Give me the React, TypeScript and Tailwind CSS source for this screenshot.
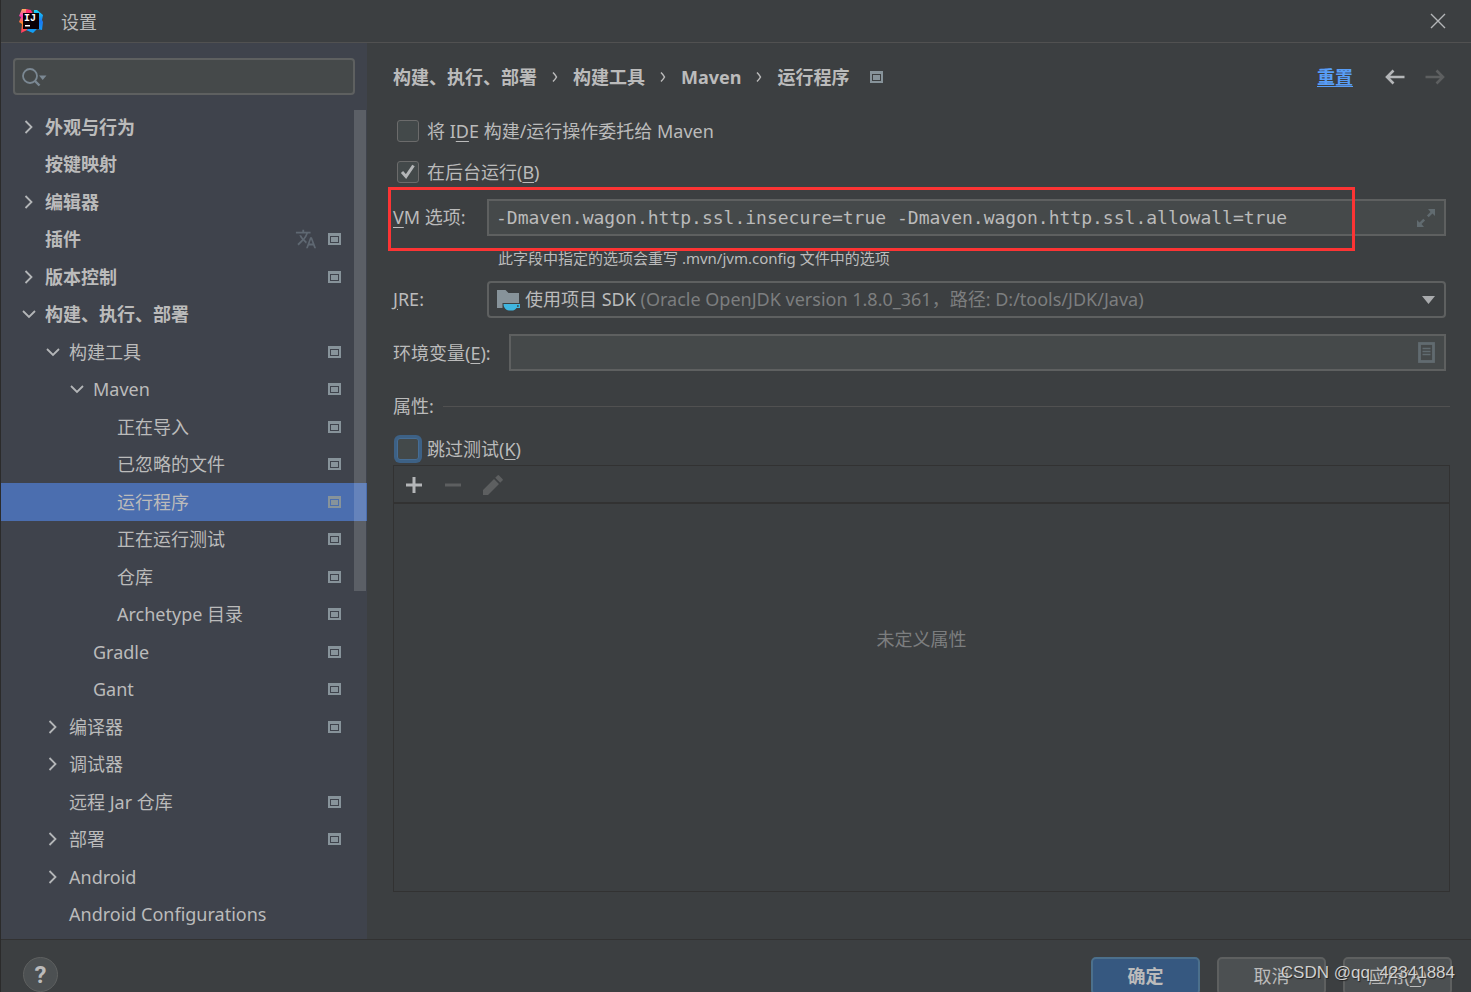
import React, { useState } from "react";
import { MdTranslate } from "react-icons/md";

type TreeNode = {
  label: string;
  level: 0 | 1 | 2 | 3;
  state?: "open" | "closed";
  project?: boolean;
  translate?: boolean;
};

const nodes: TreeNode[] = [
  { label: "外观与行为", level: 0, state: "closed" },
  { label: "按键映射", level: 0 },
  { label: "编辑器", level: 0, state: "closed" },
  { label: "插件", level: 0, project: true, translate: true },
  { label: "版本控制", level: 0, state: "closed", project: true },
  { label: "构建、执行、部署", level: 0, state: "open" },
  { label: "构建工具", level: 1, state: "open", project: true },
  { label: "Maven", level: 2, state: "open", project: true },
  { label: "正在导入", level: 3, project: true },
  { label: "已忽略的文件", level: 3, project: true },
  { label: "运行程序", level: 3, project: true },
  { label: "正在运行测试", level: 3, project: true },
  { label: "仓库", level: 3, project: true },
  { label: "Archetype 目录", level: 3, project: true },
  { label: "Gradle", level: 2, project: true },
  { label: "Gant", level: 2, project: true },
  { label: "编译器", level: 1, state: "closed", project: true },
  { label: "调试器", level: 1, state: "closed" },
  { label: "远程 Jar 仓库", level: 1, project: true },
  { label: "部署", level: 1, state: "closed", project: true },
  { label: "Android", level: 1, state: "closed" },
  { label: "Android Configurations", level: 1 },
];

const indent = ["pl-4", "pl-10", "pl-16", "pl-22"];

function ProjectIcon() {
  return (
    <svg width="13" height="12" viewBox="0 0 13 12" className="shrink-0" aria-hidden="true">
      <path fill="#87939a" fillRule="evenodd" d="M0 0h13v12H0zM2 3v7h9V3z" />
      <rect x="3" y="4" width="7" height="5" fill="#87939a" />
    </svg>
  );
}

function Chevron({ open }: { open: boolean }) {
  return (
    <svg width="16" height="16" viewBox="0 0 16 16" fill="none" stroke="#b4b6b8" strokeWidth="1.8" aria-hidden="true">
      {open ? <path d="M2 5l6 6 6-6" /> : <path d="M4.500 2l6 6-6 6" />}
    </svg>
  );
}

function PathArrow() {
  return (
    <span className="flex w-9 justify-center">
      <svg width="6" height="12" viewBox="0 0 6 12" fill="none" stroke="#bbbbbb" strokeWidth="1.5" aria-hidden="true">
        <path d="M1 1.500q2.500 2.500 3.500 4.500q-1 2-3.500 4.500" />
      </svg>
    </span>
  );
}

function IdeaLogo() {
  return (
    <svg width="24" height="24" viewBox="0 0 24 24" aria-hidden="true">
      <defs>
        <linearGradient id="warm" x1="0" y1="0" x2="0" y2="1">
          <stop offset="0" stopColor="#fcb05a" />
          <stop offset="0.3" stopColor="#f535b8" />
          <stop offset="0.6" stopColor="#ff8a1f" />
          <stop offset="1" stopColor="#ff2f6d" />
        </linearGradient>
        <linearGradient id="cool" x1="0" y1="0" x2="0" y2="1">
          <stop offset="0" stopColor="#16d4f7" />
          <stop offset="0.5" stopColor="#1a78f2" />
          <stop offset="1" stopColor="#12a5f5" />
        </linearGradient>
      </defs>
      <path fill="url(#cool)" d="M15 1l3 0 6 5-1 5 1 2-1 8-5-1-4 4-7-3 8-4z" />
      <path fill="url(#warm)" d="M3 0l5 0 4 8-4 13-6 3 1-9-3-2 2-5-2-1z" />
      <path fill="#fe2d72" d="M7 0l5 1 2 4 2 2H7z" />
      <rect x="4" y="4" width="16" height="16" fill="#0a0006" />
      <text x="5" y="12" fill="#fff" fontSize="10" fontWeight="700" fontFamily="Liberation Mono, monospace">
        IJ
      </text>
      <rect x="6" y="16" width="5" height="1.500" fill="#fff" />
    </svg>
  );
}

function CheckRow({
  id,
  initial = false,
  focused = false,
  className,
  children,
}: {
  id: string;
  initial?: boolean;
  focused?: boolean;
  className: string;
  children: React.ReactNode;
}) {
  const [on, setOn] = useState(initial);
  return (
    <div className={`flex shrink-0 items-center gap-2 pl-1 ${className}`}>
      <span className="relative flex">
        <input
          id={id}
          type="checkbox"
          checked={on}
          onChange={(e) => setOn(e.target.checked)}
          className={`size-[22px] appearance-none border outline-none ${
            focused
              ? "rounded-[3px] border-[#466d94] bg-[#43494a] ring-3 ring-[#3d6185]"
              : "rounded-[3px] border-[#6b6b6b] bg-[#43494a]"
          }`}
        />
        {on && (
          <svg
            className="pointer-events-none absolute inset-0"
            width="22"
            height="22"
            viewBox="0 0 22 22"
            fill="none"
            stroke="#b4b6b8"
            strokeWidth="3"
            aria-hidden="true"
          >
            <path d="M5 11l4 4.500L16.500 4.500" />
          </svg>
        )}
      </span>
      <label htmlFor={id}>{children}</label>
    </div>
  );
}

function Key({ children }: { children: React.ReactNode }) {
  return <span className="underline underline-offset-3">{children}</span>;
}

export default function App() {
  const [selected, setSelected] = useState("运行程序");
  const [vm, setVm] = useState(
    "-Dmaven.wagon.http.ssl.insecure=true -Dmaven.wagon.http.ssl.allowall=true",
  );
  const [env, setEnv] = useState("");

  return (
    <div className="relative flex h-screen flex-col overflow-hidden border-l border-[#2b2b2b] bg-[#3c3f41] font-['Noto_Sans','Noto_Sans_CJK_SC',sans-serif] text-[18px] leading-6 text-[#bbbbbb]">
      <header className="flex h-[43px] shrink-0 items-center border-b border-[#515151] pr-[25px] pl-[18px]">
        <IdeaLogo />
        <h1 className="flex-1 pt-[2px] pl-[18px]">设置</h1>
        <button type="button" aria-label="关闭">
          <svg width="16" height="16" viewBox="0 0 16 16" fill="none" stroke="#b4b6b8" strokeWidth="1.400">
            <path d="M1 1l14 14M15 1L1 15" />
          </svg>
        </button>
      </header>

      <div className="flex min-h-0 flex-1">
        <aside className="relative flex w-[366px] shrink-0 flex-col bg-[#3f434c] pb-[6px]">
          <div className="mx-3 mt-[15px] mb-[13px] flex h-[37px] shrink-0 items-center rounded-[4px] border-2 border-[#5e6060] bg-[#45494a] px-[7px]">
            <svg width="26" height="20" viewBox="0 0 26 20" fill="none" aria-hidden="true">
              <circle cx="8" cy="9" r="7" stroke="#7b8893" strokeWidth="1.800" />
              <path d="M13 14l4.500 4.500" stroke="#7b8893" strokeWidth="2.400" />
              <path d="M17 8.500h7.500L20.700 13z" fill="#7b8893" />
            </svg>
            <input aria-label="搜索设置" className="min-w-0 flex-1 bg-transparent outline-none" />
          </div>
          <ul className="grid min-h-0 flex-1 auto-rows-fr">
            {nodes.map((n) => (
              <li key={n.label} className="flex min-h-0">
                <button
                  type="button"
                  onClick={() => setSelected(n.label)}
                  className={`flex flex-1 items-center pr-[26px] text-left ${indent[n.level]} ${
                    n.level === 0 ? "font-bold" : ""
                  } ${selected === n.label ? "bg-[#4b6eaf]" : ""}`}
                >
                  <span className="mr-1 flex w-6 justify-center">
                    {n.state && <Chevron open={n.state === "open"} />}
                  </span>
                  <span className="flex-1">{n.label}</span>
                  {n.translate && <MdTranslate className="mr-[11px] size-[22px] text-[#5f6872]" />}
                  {n.project && <ProjectIcon />}
                </button>
              </li>
            ))}
          </ul>
          <div className="pointer-events-none absolute top-[67px] right-px bottom-[348px] w-3 bg-white/15" />
        </aside>

        <main className="flex min-w-0 flex-1 flex-col pr-[21px] pb-[47px] pl-[26px]">
          <div className="flex h-[68px] shrink-0 items-center font-bold">
            <nav className="flex flex-1 items-center">
              <span>构建、执行、部署</span>
              <PathArrow />
              <span>构建工具</span>
              <PathArrow />
              <span>Maven</span>
              <PathArrow />
              <span className="mr-[21px]">运行程序</span>
              <ProjectIcon />
            </nav>
            <a href="#reset" className="mr-8 text-[#589df6] underline underline-offset-2">
              重置
            </a>
            <button type="button" aria-label="后退" className="mr-5 text-[#b4b6b8]">
              <svg width="20" height="16" viewBox="0 0 20 16" fill="none" stroke="currentColor" strokeWidth="2.600">
                <path d="M19.500 8H2M8.500 1.500L2 8l6.500 6.500" />
              </svg>
            </button>
            <button type="button" aria-label="前进" className="mr-[5px] text-[#5d5f60]">
              <svg width="20" height="16" viewBox="0 0 20 16" fill="none" stroke="currentColor" strokeWidth="2.600">
                <path d="M.500 8h17.500M11.500 1.500L18 8l-6.500 6.500" />
              </svg>
            </button>
          </div>

          <CheckRow id="delegate" className="h-10">
            将 I<Key>D</Key>E 构建/运行操作委托给 Maven
          </CheckRow>
          <CheckRow id="background" initial className="h-[42px]">
            在后台运行(<Key>B</Key>)
          </CheckRow>

          <div className="relative mr-1 flex shrink-0 items-center pt-[6px]">
            <label htmlFor="vm" className="w-[94px] shrink-0 pb-[2px]">
              <Key>V</Key>M 选项:
            </label>
            <div className="flex h-[37px] min-w-0 flex-1 items-center border-2 border-[#5e6060] bg-[#45494a] pr-[9px] pl-[7px]">
              <input
                id="vm"
                value={vm}
                onChange={(e) => setVm(e.target.value)}
                className="min-w-0 flex-1 bg-transparent font-['DejaVu_Sans_Mono',monospace] text-[18px] outline-none"
              />
              <button type="button" aria-label="展开">
                <svg width="18" height="18" viewBox="0 0 18 18" fill="#616b70">
                  <path d="M11 0h7v7l-2.500-2.500-3.800 3.800-1.800-1.800 3.600-3.600zM0 11l2.500 2.500 3.800-3.800 1.800 1.800-3.600 3.600L7 18H0z" />
                </svg>
              </button>
            </div>
            <div className="pointer-events-none absolute -top-[6px] right-[91px] -left-[5px] h-16 border-3 border-[#fc3434]" />
          </div>
          <p className="flex h-[45px] shrink-0 items-center pb-[2px] pl-[105px] text-[15px]">
            此字段中指定的选项会重写 .mvn/jvm.config 文件中的选项
          </p>

          <div className="mr-1 flex shrink-0 items-center">
            <label htmlFor="jre" className="w-[94px] shrink-0 pb-[2px]">
              <Key>J</Key>RE:
            </label>
            <div className="relative flex h-[37px] min-w-0 flex-1 items-center rounded-[4px] border-2 border-[#5e6060] pr-[9px] pl-2">
              <svg width="24" height="22" viewBox="0 0 24 22" className="mr-1 shrink-0" aria-hidden="true">
                <path fill="#87939a" d="M0 1h8.500l3 3H22v10H5.500v5H0z" />
                <path fill="#40b6e0" d="M6.500 15H23v4h-3.500c-1 1.500-2.500 2.500-3.500 2.500h-4c-3 0-5.500-3-5.500-6.500zm13.500 1.300v1.500h1.700v-1.500z" />
              </svg>
              <span className="flex-1 truncate pb-[2px]" aria-hidden="true">
                使用项目 SDK{" "}
                <span className="text-[#7c7e7f]">
                  (Oracle OpenJDK version 1.8.0_361，路径: D:/tools/JDK/Java)
                </span>
              </span>
              <svg width="13" height="8" viewBox="0 0 13 8" aria-hidden="true">
                <path fill="#a9abad" d="M0 0h13L6.500 8z" />
              </svg>
              <select id="jre" className="absolute inset-0 opacity-0">
                <option>使用项目 SDK</option>
              </select>
            </div>
          </div>

          <div className="mt-4 mr-1 flex shrink-0 items-center">
            <label htmlFor="env" className="w-[116px] shrink-0">
              环境变量(<Key>E</Key>):
            </label>
            <div className="flex h-[37px] min-w-0 flex-1 items-center border-2 border-[#5e6060] bg-[#45494a] pr-[9px] pl-[7px]">
              <input
                id="env"
                value={env}
                onChange={(e) => setEnv(e.target.value)}
                className="min-w-0 flex-1 bg-transparent outline-none"
              />
              <button type="button" aria-label="编辑环境变量">
                <svg width="17" height="21" viewBox="0 0 17 21" fill="none" stroke="#616b70">
                  <rect x="1.500" y="1.500" width="14" height="18" strokeWidth="2.800" />
                  <path d="M4.500 6.500h8M4.500 9.500h8M4.500 12.500h8" strokeWidth="1.500" />
                </svg>
              </button>
            </div>
          </div>

          <div className="flex h-[62px] shrink-0 items-center gap-[9px] pt-2">
            <h2>属性:</h2>
            <div className="h-px flex-1 bg-[#515151]" />
          </div>

          <CheckRow id="skip" focused className="h-8">
            跳过测试(<Key>K</Key>)
          </CheckRow>

          <section className="flex min-h-0 flex-1 flex-col border border-[#323232]">
            <div className="flex h-[38px] shrink-0 items-center gap-[23px] border-b-2 border-[#323232] px-3 pt-px">
              <button type="button" aria-label="添加">
                <svg width="16" height="16" viewBox="0 0 16 16" stroke="#b4b6b8" strokeWidth="3">
                  <path d="M8 0v16M0 8h16" />
                </svg>
              </button>
              <button type="button" aria-label="移除">
                <svg width="16" height="16" viewBox="0 0 16 16" stroke="#5d5f60" strokeWidth="3">
                  <path d="M0 8h16" />
                </svg>
              </button>
              <button type="button" aria-label="编辑" className="-ml-px">
                <svg width="20" height="20" viewBox="0 0 20 20" fill="#5d5f60">
                  <path d="M0 20v-5L11 4l5 5L5 20zM12.200 2.800L14.500.500q.8-.8 1.600 0l3.400 3.400q.8.8 0 1.600l-2.300 2.300z" />
                </svg>
              </button>
            </div>
            <div className="flex flex-1 justify-center pt-[123px] text-[#7c7e7f]">未定义属性</div>
          </section>
        </main>
      </div>

      <footer className="flex h-[53px] shrink-0 items-start gap-[17px] border-t border-[#323232] pt-[17px] pr-[19px] pl-[22px]">
        <button
          type="button"
          aria-label="帮助"
          className="flex size-[35px] shrink-0 items-center justify-center rounded-full border border-[#5e6060] bg-[#4c5052] font-['Roboto',sans-serif] text-[24px] font-bold"
        >
          ?
        </button>
        <div className="flex-1" />
        <button type="button" className="h-[38px] w-[109px] rounded-[5px] border-2 border-[#4c708c] bg-[#365880] font-bold">
          确定
        </button>
        <button type="button" className="h-[38px] w-[109px] rounded-[5px] border-2 border-[#5e6060] bg-[#4c5052]">
          取消
        </button>
        <button type="button" className="h-[38px] w-[109px] rounded-[5px] border-2 border-[#5e6060] bg-[#4c5052]">
          应用(<Key>A</Key>)
        </button>
      </footer>

      <p className="pointer-events-none absolute right-4 bottom-[7px] font-['Liberation_Sans',sans-serif] text-[17px] text-[#d0d0d0] text-shadow-[1px_1px_1px_#222]">
        CSDN @qq_42341884
      </p>
    </div>
  );
}
